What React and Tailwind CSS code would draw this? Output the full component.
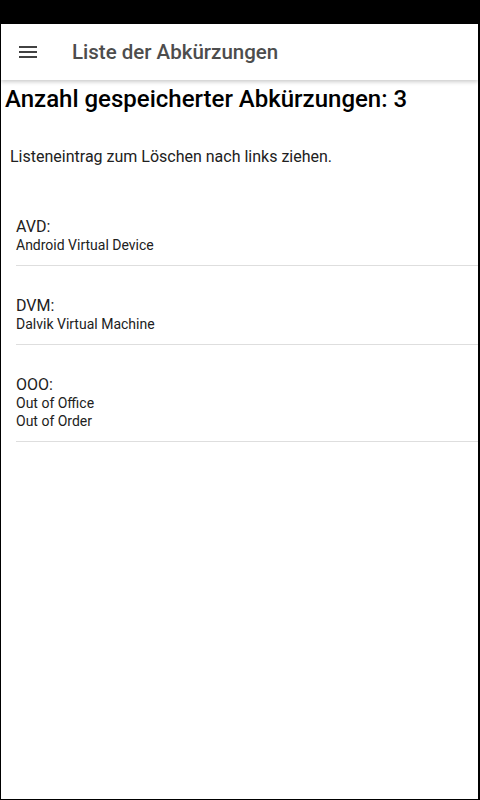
import React from 'react';

const entries = [
  { short: 'AVD', long: ['Android Virtual Device'] },
  { short: 'DVM', long: ['Dalvik Virtual Machine'] },
  { short: 'OOO', long: ['Out of Office', 'Out of Order'] },
];

const MenuIcon = () => (
  <svg width="24" height="24" viewBox="0 0 24 24" fill="#424242">
    <path d="M3 18h18v-2H3v2zm0-5h18v-2H3v2zm0-7v2h18V6H3z" />
  </svg>
);

const App = () => {
  return (
    <div className="w-[480px] h-[800px] flex flex-col bg-black font-['Roboto',sans-serif]">
      {/* Status bar */}
      <div className="h-6 shrink-0 bg-black" />

      <div className="flex-1 flex flex-col bg-white border-l border-r-2 border-b border-black overflow-hidden">
        {/* Toolbar */}
        <div className="h-14 shrink-0 flex items-center bg-white shadow-[0_2px_4px_rgba(0,0,0,0.2)] relative z-10">
          <div className="w-[71px] pl-[15px] flex items-center">
            <MenuIcon />
          </div>
          <h1 className="text-[20.5px] font-medium text-[#4d4d4d]">Liste der Abkürzungen</h1>
        </div>

        {/* Content */}
        <div className="flex-1 flex flex-col">
          <h2 className="mt-[5px] ml-[4px] text-[24px] leading-[28px] font-medium text-black">
            Anzahl gespeicherter Abkürzungen: 3
          </h2>
          <p className="mt-[32px] ml-[9px] text-[16px] leading-[24px] text-[#212121]">
            Listeneintrag zum Löschen nach links ziehen.
          </p>

          <ul className="mt-[18px] ml-[15px]">
            {entries.map((e) => (
              <li key={e.short} className="pt-[30px] pb-[11px] border-b border-[#dedede]">
                <div className="text-[16px] leading-[19px] text-[#212121]">{e.short}:</div>
                {e.long.map((l) => (
                  <div key={l} className="text-[14px] leading-[18px] text-[#212121]">{l}</div>
                ))}
              </li>
            ))}
          </ul>
        </div>
      </div>
    </div>
  );
};

export default App;
